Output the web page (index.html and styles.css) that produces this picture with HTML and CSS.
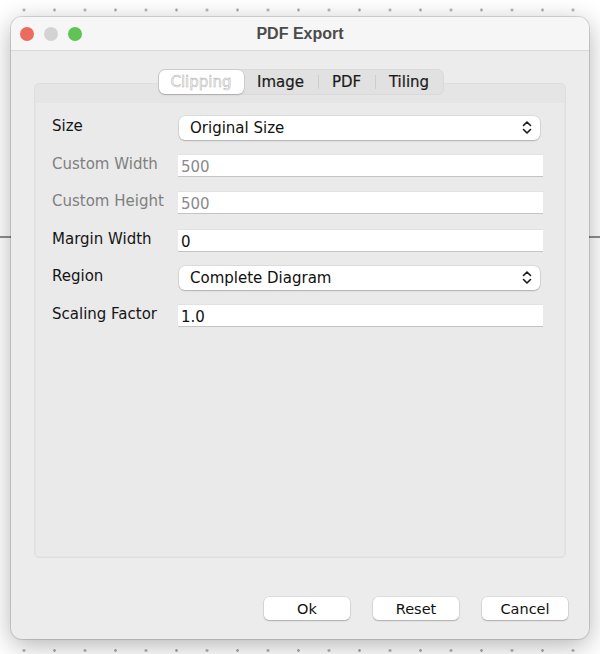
FILE: index.html
```html
<!DOCTYPE html>
<html lang="en">
<head>
  <meta charset="UTF-8">
  <meta name="viewport" content="width=device-width, initial-scale=1.0">
  <title>PDF Export</title>
  <link rel="stylesheet" href="styles.css">
</head>
<body>
  <div class="desk">
    <div class="window">

      <!-- Title bar -->
      <div class="titlebar">
        <div class="lights">
          <span class="light red"></span>
          <span class="light gray"></span>
          <span class="light green"></span>
        </div>
        <div class="title">PDF Export</div>
        <div></div>
      </div>

      <div class="content">
        <!-- Tabs -->
        <div class="tabs-wrap">
          <div class="tabs">
            <span class="tab active" style="width: 85px">Clipping</span>
            <span class="tab" style="width: 74px">Image</span>
            <span class="sep"></span>
            <span class="tab" style="width: 56px">PDF</span>
            <span class="sep"></span>
            <span class="tab" style="width: 67px">Tiling</span>
          </div>
        </div>

        <!-- Clipping panel -->
        <div class="panel">
          <div class="panel-inner">
            <div class="row">
              <label>Size</label>
              <div class="combo">
                <span>Original Size</span>
                <svg width="10" height="15" viewBox="0 0 10 15"><path d="M1.5 5.5 L5 2 L8.5 5.5 M1.5 9.5 L5 13 L8.5 9.5" fill="none" stroke="#1a1a1a" stroke-width="1.6" stroke-linecap="round" stroke-linejoin="round"/></svg>
              </div>
            </div>
            <div class="row">
              <label class="disabled">Custom Width</label>
              <div class="field disabled">500</div>
            </div>
            <div class="row">
              <label class="disabled">Custom Height</label>
              <div class="field disabled">500</div>
            </div>
            <div class="row">
              <label>Margin Width</label>
              <div class="field">0</div>
            </div>
            <div class="row">
              <label>Region</label>
              <div class="combo">
                <span>Complete Diagram</span>
                <svg width="10" height="15" viewBox="0 0 10 15"><path d="M1.5 5.5 L5 2 L8.5 5.5 M1.5 9.5 L5 13 L8.5 9.5" fill="none" stroke="#1a1a1a" stroke-width="1.6" stroke-linecap="round" stroke-linejoin="round"/></svg>
              </div>
            </div>
            <div class="row">
              <label>Scaling Factor</label>
              <div class="field">1.0</div>
            </div>
          </div>
        </div>

        <!-- Buttons -->
        <div class="footer">
          <button class="button">Ok</button>
          <button class="button">Reset</button>
          <button class="button">Cancel</button>
        </div>
      </div>
    </div>
  </div>
</body>
</html>
```

FILE: styles.css
```css
body {
  margin: 0;
  padding: 0;
  font-family: "DejaVu Sans", "Liberation Sans", sans-serif;
  background-color: #ffffff;
  background-image:
    linear-gradient(to bottom, transparent 236px, #8e8e8e 236px, #8e8e8e 238px, transparent 238px),
    radial-gradient(circle, #a9a9a9 1px, transparent 1.6px);
  background-size: 600px 654px, 30.5px 30.5px;
  background-position: 0 0, 8.75px -5.25px;
  background-repeat: no-repeat, repeat;
}

.desk {
  width: 600px;
  height: 654px;
  padding: 17px 11px 0;
  box-sizing: border-box;
}

.window {
  width: 578px;
  height: 622px;
  background-color: #ececec;
  border-radius: 11px;
  box-shadow: 0 0 0 1px rgba(0, 0, 0, 0.13), 0 6px 26px rgba(0, 0, 0, 0.3);
  display: flex;
  flex-direction: column;
  overflow: hidden;
}

.titlebar {
  height: 34px;
  background-color: #f6f6f6;
  border-bottom: 1px solid #d9d9d9;
  box-sizing: border-box;
  display: grid;
  grid-template-columns: 1fr auto 1fr;
  align-items: center;
}

.lights {
  display: flex;
  gap: 10px;
  padding-left: 9px;
}

.light {
  width: 14px;
  height: 14px;
  border-radius: 50%;
}

.red { background-color: #ed6a5e; }
.gray { background-color: #d3d3d3; }
.green { background-color: #60c454; }

.title {
  font-family: "Liberation Sans", Arial, sans-serif;
  font-weight: bold;
  font-size: 16px;
  color: #4b4b4b;
}

.content {
  flex: 1;
  display: flex;
  flex-direction: column;
  padding: 18px 23px 19px;
}

.tabs-wrap {
  display: flex;
  justify-content: center;
  position: relative;
  z-index: 1;
}

.tabs {
  display: flex;
  align-items: center;
  height: 26px;
  padding: 0 1px;
  margin-left: 1px;
  background-color: #e1e1e1;
  border-radius: 7px;
  box-shadow: inset 0 0 0 0.5px rgba(0, 0, 0, 0.06);
  box-sizing: border-box;
}

.tab {
  height: 24px;
  line-height: 25px;
  text-align: center;
  font-size: 15px;
  color: #1a1a1a;
  -webkit-text-stroke: 0.2px #1a1a1a;
}

.tab.active {
  background-color: #ffffff;
  border-radius: 6px;
  box-shadow: 0 0 0 0.5px rgba(0, 0, 0, 0.12), 0 1px 1.5px rgba(0, 0, 0, 0.18);
  color: #f4f4f4;
  -webkit-text-stroke: 0.5px #b4b4b4;
}

.sep {
  width: 1px;
  height: 14px;
  background-color: #cdcdcd;
}

.panel {
  height: 475px;
  margin-top: -12px;
  background-color: #e5e5e5;
  border: 1px solid #dedede;
  border-radius: 5px;
  padding: 19px 1px 1px;
  box-sizing: border-box;
}

.panel-inner {
  height: 100%;
  background-color: #eaeaea;
  padding: 6px 21px 0 16px;
  box-sizing: border-box;
}

.row {
  display: grid;
  grid-template-columns: 126px 1fr;
  align-items: center;
  height: 37.5px;
}

.row label {
  font-size: 15px;
  color: #151515;
  margin-bottom: 3px;
}

.row label.disabled {
  color: #7f7f7f;
}

.combo {
  height: 24px;
  margin: 0 3px 0 1px;
  padding: 0 8px 0 11px;
  background-color: #ffffff;
  border-radius: 6px;
  box-shadow: 0 0 0 0.5px rgba(0, 0, 0, 0.12), 0 1px 1.5px rgba(0, 0, 0, 0.2);
  display: flex;
  align-items: center;
  justify-content: space-between;
  font-size: 15px;
  color: #111111;
}

.field {
  height: 23px;
  line-height: 25px;
  padding-left: 3px;
  background-color: #ffffff;
  border-top: 1px solid #e2e2e2;
  border-bottom: 1px solid #c4c4c4;
  box-sizing: border-box;
  font-size: 15px;
  color: #111111;
}

.field.disabled {
  color: #8a8a8a;
}

.footer {
  display: flex;
  justify-content: flex-end;
  gap: 23px;
  margin-top: auto;
  margin-right: -2px;
}

.button {
  width: 86px;
  height: 23px;
  padding: 0;
  background-color: #ffffff;
  border: none;
  border-radius: 5px;
  box-shadow: 0 0 0 0.5px rgba(0, 0, 0, 0.12), 0 1px 1.5px rgba(0, 0, 0, 0.22);
  font-family: "DejaVu Sans", "Liberation Sans", sans-serif;
  font-size: 14.5px;
  color: #111111;
}
```
